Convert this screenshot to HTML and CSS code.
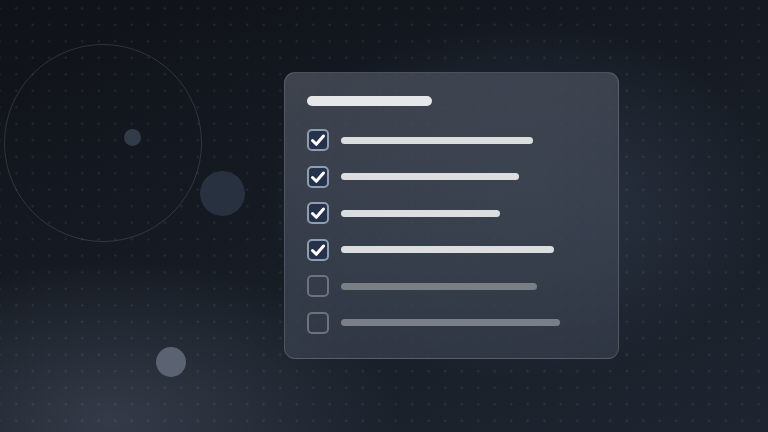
FILE: index.html
```html
<!DOCTYPE html>
<html lang="en">
<head>
    <meta charset="UTF-8">
    <meta name="viewport" content="width=device-width, initial-scale=1.0">
    <title>Checklist</title>
    <link rel="stylesheet" href="styles.css">
</head>
<body>
    <div class="scene">
        <div class="deco ring"></div>
        <div class="deco dot-small"></div>
        <div class="deco dot-mid"></div>
        <div class="deco dot-low"></div>

        <div class="checklist-card">
            <div class="card-title"></div>
            <div class="task-list">
                <div class="task done">
                    <span class="box"><svg viewBox="0 0 22 22"><polyline points="5.5,11.5 9.3,15.3 16.5,7"/></svg></span>
                    <span class="bar" style="width:192px"></span>
                </div>
                <div class="task done">
                    <span class="box"><svg viewBox="0 0 22 22"><polyline points="5.5,11.5 9.3,15.3 16.5,7"/></svg></span>
                    <span class="bar" style="width:178px"></span>
                </div>
                <div class="task done">
                    <span class="box"><svg viewBox="0 0 22 22"><polyline points="5.5,11.5 9.3,15.3 16.5,7"/></svg></span>
                    <span class="bar" style="width:159px"></span>
                </div>
                <div class="task done">
                    <span class="box"><svg viewBox="0 0 22 22"><polyline points="5.5,11.5 9.3,15.3 16.5,7"/></svg></span>
                    <span class="bar" style="width:213px"></span>
                </div>
                <div class="task">
                    <span class="box"></span>
                    <span class="bar" style="width:196px"></span>
                </div>
                <div class="task">
                    <span class="box"></span>
                    <span class="bar" style="width:219px"></span>
                </div>
            </div>
        </div>
    </div>
</body>
</html>
```

FILE: styles.css
```css
html, body {
    margin: 0;
    padding: 0;
    font-family: "Liberation Sans", Arial, sans-serif;
}
.scene {
    position: relative;
    width: 768px;
    height: 432px;
    overflow: hidden;
    box-sizing: border-box;
    padding: 72px 0 0 284px;
    background-color: #151a22;
    background-image:
        radial-gradient(circle, rgba(255, 255, 255, 0.07) 1px, transparent 1.4px),
        radial-gradient(ellipse 360px 200px at 110px 420px, rgba(85, 93, 110, 0.45), transparent 80%),
        radial-gradient(ellipse 340px 240px at 520px 200px, rgba(60, 75, 95, 0.55), transparent 75%),
        linear-gradient(160deg, #0f1218 0%, #161b23 45%, #1e2530 100%);
    background-size: 16.5px 16.5px, auto, auto, auto;
    background-position: 8px 0px, 0 0, 0 0, 0 0;
}
.deco {
    position: absolute;
    border-radius: 50%;
}
.ring {
    left: 4px;
    top: 44px;
    width: 196px;
    height: 196px;
    border: 1px solid rgba(255, 255, 255, 0.13);
}
.dot-small {
    left: 124px;
    top: 129px;
    width: 17px;
    height: 17px;
    background: #323b48;
}
.dot-mid {
    left: 200px;
    top: 171px;
    width: 45px;
    height: 45px;
    background: #283140;
}
.dot-low {
    left: 156px;
    top: 347px;
    width: 30px;
    height: 30px;
    background: #5b6271;
}
.checklist-card {
    position: relative;
    width: 335px;
    height: 287px;
    box-sizing: border-box;
    padding: 23px 22px;
    border-radius: 11px;
    border: 1px solid rgba(255, 255, 255, 0.14);
    background: linear-gradient(170deg, rgba(72, 77, 88, 0.82) 0%, rgba(60, 68, 82, 0.8) 60%, rgba(52, 59, 72, 0.8) 100%);
}
.card-title {
    width: 125px;
    height: 10px;
    border-radius: 5px;
    background: #e6e7e9;
    margin-bottom: 23px;
}
.task-list {
    display: flex;
    flex-direction: column;
    gap: 14.6px;
}
.task {
    display: flex;
    align-items: center;
    height: 22px;
}
.box {
    width: 22px;
    height: 22px;
    box-sizing: border-box;
    border-radius: 5px;
    border: 2px solid #6e737b;
    flex-shrink: 0;
}
.box svg {
    display: block;
    width: 22px;
    height: 22px;
    margin: -2px;
}
.box polyline {
    fill: none;
    stroke: #ffffff;
    stroke-width: 3;
    stroke-linecap: round;
    stroke-linejoin: round;
}
.task.done .box {
    background: #26324a;
    border-color: #8f9db2;
}
.bar {
    display: block;
    height: 7px;
    border-radius: 4px;
    margin-left: 12px;
    background: #7a7e85;
}
.task.done .bar {
    background: #dcdddf;
}
```
